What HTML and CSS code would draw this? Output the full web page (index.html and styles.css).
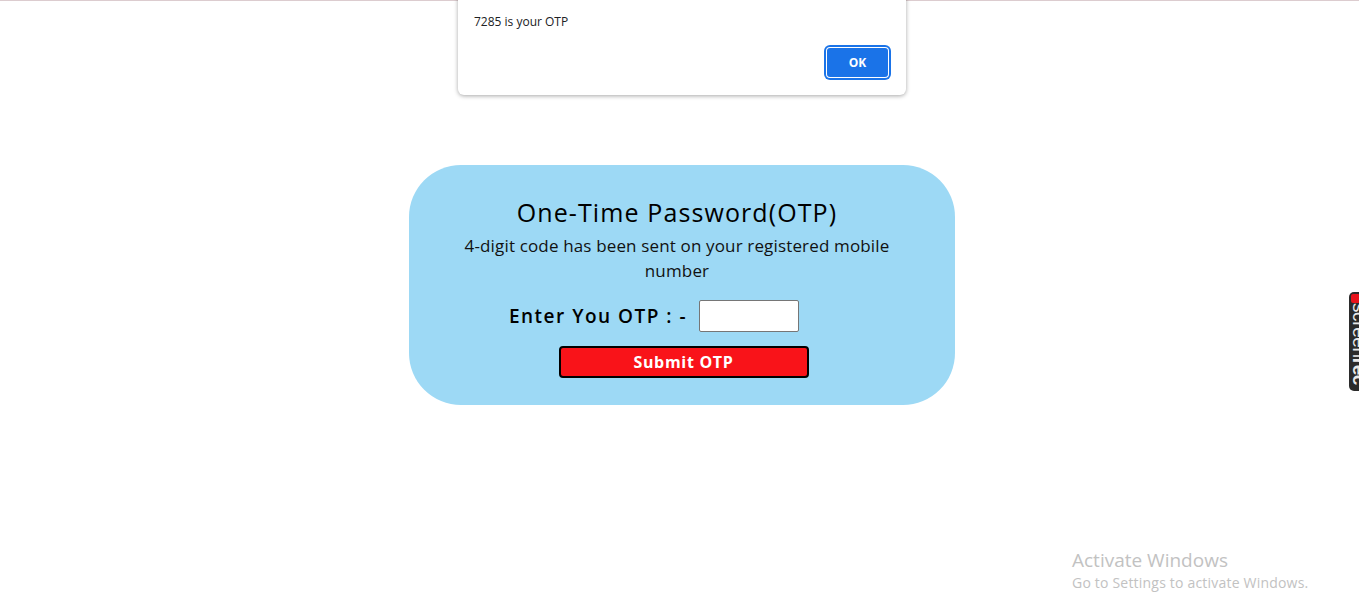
FILE: index.html
```html
<!DOCTYPE html>
<html>
<head>
<meta charset="utf-8">
<link rel="stylesheet" href="styles.css">
</head>
<body>
<div class="topline"></div>
<main class="page">
  <section class="card">
    <h1 class="title">One-Time Password(OTP)</h1>
    <p class="sub">4-digit code has been sent on your registered mobile number</p>
    <div class="row">
      <label class="label" for="otp">Enter You OTP : -</label>
      <input id="otp" class="otp" type="text">
    </div>
    <button class="submit">Submit OTP</button>
  </section>
</main>

<div class="dialog">
  <div class="dlg-title">localhost says</div>
  <div class="dlg-msg">7285 is your OTP</div>
  <div class="dlg-actions"><button class="ok">OK</button></div>
</div>

<div class="rec"><span class="rec-dot"></span><span class="rec-text">screen<b>rec</b></span></div>

<div class="activate">
  <div class="act-1">Activate Windows</div>
  <div class="act-2">Go to Settings to activate Windows.</div>
</div>
</body>
</html>
```
FILE: styles.css
```css
html, body { margin: 0; padding: 0; background: #fff; }
body { font-family: "Open Sans", "Noto Sans", sans-serif; height: 614px; overflow: hidden; position: relative; }
.topline { height: 1px; background: #dccccf; }
.page { display: flex; justify-content: center; padding-top: 164px; padding-left: 5px; }
.card {
  width: 546px; height: 240px; box-sizing: border-box;
  background: #9dd9f5; border-radius: 52px;
  display: flex; flex-direction: column; align-items: center;
  padding-top: 32px; padding-right: 10px;
}
.title { margin: 0; font-weight: 400; font-size: 25px; letter-spacing: 1.1px; line-height: 30px; color: #000; }
.sub { margin: 6px 0 0; width: 450px; text-align: center; font-size: 17px; line-height: 25px; color: #111; letter-spacing: 0.15px; }
.row { display: flex; align-items: center; margin-top: 17px; margin-right: 46px; }
.label { font-size: 19px; font-weight: 600; letter-spacing: 1.5px; color: #000; margin-right: 12px; }
.otp { width: 100px; height: 32px; box-sizing: border-box; border: 1px solid #767676; border-radius: 2px; background: #fff; margin: 0; padding: 0; }
.submit {
  margin-top: 14px; margin-left: 13px; width: 250px; height: 32px;
  background: #f91319; color: #fff; border: 2px solid #000; border-radius: 4px;
  font-family: "Open Sans", sans-serif; font-weight: 700; font-size: 16px; letter-spacing: 0.7px;
}

.dialog {
  position: absolute; left: 458px; top: -20px; width: 448px; height: 115px;
  background: #fff; border-radius: 0 0 6px 6px;
  box-shadow: 0 1px 4px rgba(0,0,0,0.35);
  box-sizing: border-box; padding: 0 16px 0 16px;
  font-family: "Open Sans", sans-serif;
}
.dlg-title { font-size: 15px; height: 20px; line-height: 20px; color: #202124; padding-left: 60px; }
.dlg-msg { font-size: 12px; color: #202124; margin-top: 14px; line-height: 16px; }
.dlg-actions { display: flex; justify-content: flex-end; margin-top: 17px; }
.ok {
  width: 63px; height: 31px; background: #1a73e8; color: #fff;
  border: none; border-radius: 4px; font-weight: 700; font-size: 12px;
  box-shadow: 0 0 0 2px #1a73e8, inset 0 0 0 1px #fff;
  outline: none; margin-right: 1px; font-family: "Open Sans", sans-serif;
}

.rec {
  position: absolute; left: 1349px; top: 292px; width: 18px; height: 99px;
  background: #2b2b2b; border-radius: 5px; overflow: hidden;
}
.rec-dot { position: absolute; left: 2px; top: 2px; width: 9px; height: 9px; background: #e8131b; border-radius: 2px; }
.rec-text {
  position: absolute; left: 18px; top: 11px; transform-origin: 0 0; transform: rotate(90deg);
  color: #e9e9e9; font-size: 19px; line-height: 16px; white-space: nowrap; letter-spacing: -0.4px;
  font-family: "Liberation Sans", sans-serif;
}
.rec-text b { font-weight: 700; }

.activate { position: absolute; left: 1072px; top: 548px; color: #c2c2c2; font-family: "Open Sans", sans-serif; }
.act-1 { font-size: 19px; line-height: 24px; }
.act-2 { font-size: 14px; line-height: 20px; margin-top: 1px; letter-spacing: 0.2px; }
```
